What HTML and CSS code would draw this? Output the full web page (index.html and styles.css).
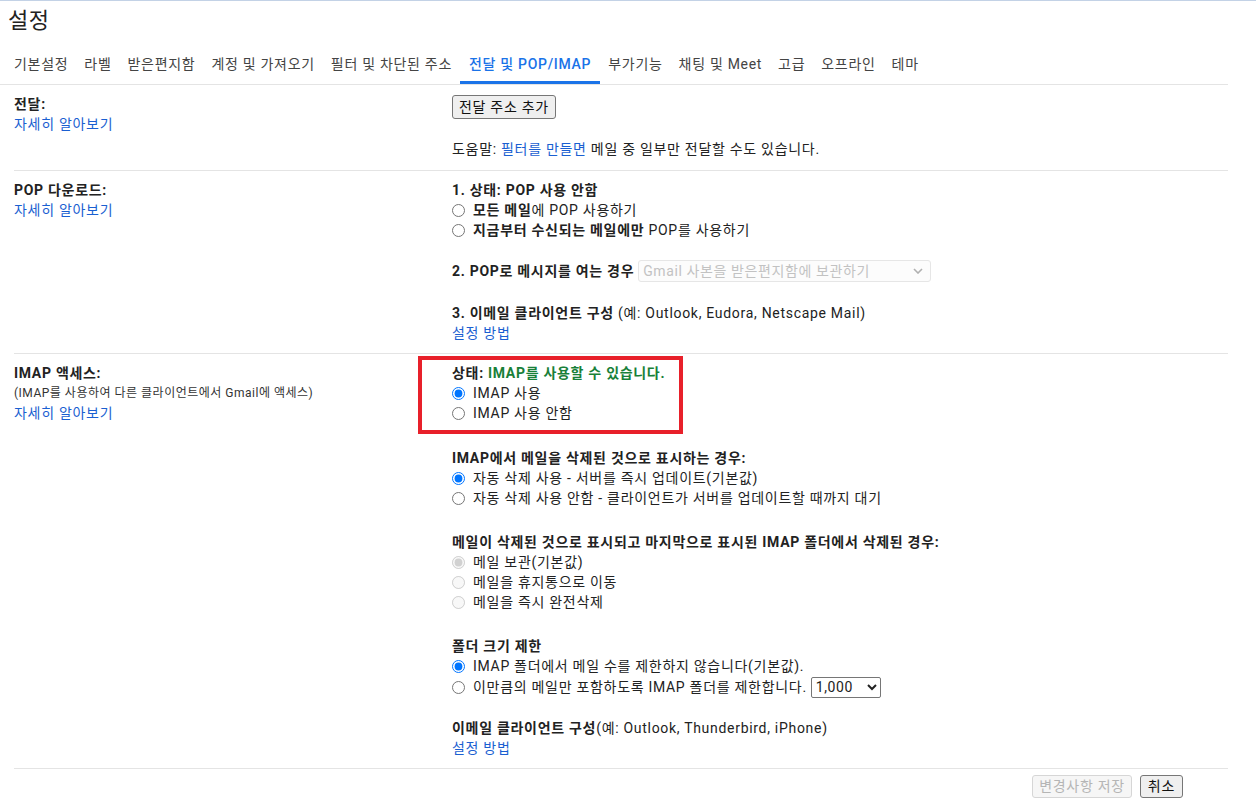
FILE: index.html
```html
<!DOCTYPE html>
<html lang="ko">
<head>
<meta charset="utf-8">
<title>설정</title>
<link rel="stylesheet" href="styles.css">
</head>
<body>
<div class="title">설정</div>
<nav class="tabs">
  <span class="tab">기본설정</span>
  <span class="tab">라벨</span>
  <span class="tab">받은편지함</span>
  <span class="tab">계정 및 가져오기</span>
  <span class="tab">필터 및 차단된 주소</span>
  <span class="tab active">전달 및 POP/IMAP</span>
  <span class="tab">부가기능</span>
  <span class="tab">채팅 및 Meet</span>
  <span class="tab">고급</span>
  <span class="tab">오프라인</span>
  <span class="tab">테마</span>
</nav>

<div class="settings">
  <div class="row row-fwd">
    <div class="left">
      <div class="b">전달:</div>
      <div><a class="link">자세히 알아보기</a></div>
    </div>
    <div class="right">
      <button class="btn btn-add">전달 주소 추가</button>
      <div class="sect gap20">도움말: <a class="link">필터를 만들면</a> 메일 중 일부만 전달할 수도 있습니다.</div>
    </div>
  </div>

  <div class="row">
    <div class="left">
      <div class="b">POP 다운로드:</div>
      <div><a class="link">자세히 알아보기</a></div>
    </div>
    <div class="right">
      <div class="sect">
        <div class="b">1. 상태: POP 사용 안함</div>
        <label class="opt"><input type="radio" name="pop"><span><b>모든 메일</b>에 POP 사용하기</span></label>
        <label class="opt"><input type="radio" name="pop"><span><b>지금부터 수신되는 메일에만</b> POP를 사용하기</span></label>
      </div>
      <div class="sect gap20 selline">
        <b>2. POP로 메시지를 여는 경우</b>
        <span class="selwrap">
          <select class="sel-dis" disabled><option>Gmail 사본을 받은편지함에 보관하기</option></select>
          <svg class="chev" width="10" height="6" viewBox="0 0 10 6"><path d="M1 1l4 4 4-4" fill="none" stroke="#b0b0b0" stroke-width="1.6"/></svg>
        </span>
      </div>
      <div class="sect gap21">
        <div><b>3. 이메일 클라이언트 구성</b> (예: Outlook, Eudora, Netscape Mail)</div>
        <div><a class="link">설정 방법</a></div>
      </div>
    </div>
  </div>

  <div class="row">
    <div class="left">
      <div class="b">IMAP 액세스:</div>
      <div class="small">(IMAP를 사용하여 다른 클라이언트에서 Gmail에 액세스)</div>
      <div><a class="link">자세히 알아보기</a></div>
    </div>
    <div class="right">
      <div class="sect status">
        <div class="b">상태: <span class="ok">IMAP를 사용할 수 있습니다.</span></div>
        <label class="opt"><input type="radio" name="imap" checked><span>IMAP 사용</span></label>
        <label class="opt"><input type="radio" name="imap"><span>IMAP 사용 안함</span></label>
        <div class="highlight"></div>
      </div>
      <div class="sect gap25">
        <div class="b">IMAP에서 메일을 삭제된 것으로 표시하는 경우:</div>
        <label class="opt"><input type="radio" name="del" checked><span>자동 삭제 사용 - 서버를 즉시 업데이트(기본값)</span></label>
        <label class="opt"><input type="radio" name="del"><span>자동 삭제 사용 안함 - 클라이언트가 서버를 업데이트할 때까지 대기</span></label>
      </div>
      <div class="sect gap24">
        <div class="b">메일이 삭제된 것으로 표시되고 마지막으로 표시된 IMAP 폴더에서 삭제된 경우:</div>
        <label class="opt"><input type="radio" name="exp" checked disabled><span>메일 보관(기본값)</span></label>
        <label class="opt"><input type="radio" name="exp" disabled><span>메일을 휴지통으로 이동</span></label>
        <label class="opt"><input type="radio" name="exp" disabled><span>메일을 즉시 완전삭제</span></label>
      </div>
      <div class="sect gap24">
        <div class="b">폴더 크기 제한</div>
        <label class="opt"><input type="radio" name="lim" checked><span>IMAP 폴더에서 메일 수를 제한하지 않습니다(기본값).</span></label>
        <label class="opt opt-sel"><input type="radio" name="lim"><span>이만큼의 메일만 포함하도록 IMAP 폴더를 제한합니다.</span>
          <select class="sel-num"><option>1,000</option><option>2,000</option><option>5,000</option><option>10,000</option></select>
        </label>
      </div>
      <div class="sect gap20">
        <div><b>이메일 클라이언트 구성</b>(예: Outlook, Thunderbird, iPhone)</div>
        <div><a class="link">설정 방법</a></div>
      </div>
    </div>
  </div>
</div>

<div class="footer">
  <button class="btn" disabled>변경사항 저장</button>
  <button class="btn btn-cancel">취소</button>
</div>
</body>
</html>
```

FILE: styles.css
```css
html, body {
  margin: 0;
  padding: 0;
  background: #fff;
}
body {
  border-top: 1px solid #c3d2e6;
  font-family: "Roboto", "Noto Sans CJK KR", sans-serif;
  font-size: 14px;
  line-height: 20px;
  letter-spacing: 0.7px;
  color: #222;
}
b, .b {
  font-weight: 700;
}
.title {
  height: 40px;
  line-height: 40px;
  padding-left: 8px;
  font-size: 22px;
  letter-spacing: 0.5px;
  color: #222;
}
.tabs {
  display: flex;
  margin-right: 28px;
  padding-left: 6px;
  border-bottom: 1px solid #e4e4e4;
}
.tab {
  padding: 13px 8px 10px;
  color: #444;
  white-space: nowrap;
}
.tab.active {
  color: #1a73e8;
  font-weight: 500;
  padding: 13px 9px 10px;
  box-shadow: inset 0 -3px 0 #1a73e8;
}
.settings {
  margin: 0 28px 0 14px;
}
.row {
  display: grid;
  grid-template-columns: 438px 1fr;
  padding: 9px 0 10px;
  border-bottom: 1px solid #e4e4e4;
}
.row-fwd {
  padding-bottom: 11px;
}
.link {
  color: #1a5fd1;
  cursor: pointer;
}
.small {
  font-size: 12px;
  letter-spacing: 0.5px;
  color: #333;
}
.sect {
  position: relative;
}
.gap20 { margin-top: 20px; }
.gap21 { margin-top: 21px; }
.gap24 { margin-top: 24px; }
.gap25 { margin-top: 25px; }
.selline {
  display: flex;
  align-items: center;
  height: 22px;
  gap: 4px;
}
.opt {
  display: flex;
  align-items: center;
  height: 20px;
  white-space: nowrap;
}
.opt input {
  width: 13px;
  height: 13px;
  margin: 0 8px 0 0;
}
.opt-sel {
  height: 22px;
}
.ok {
  color: #188038;
}
.btn {
  font-family: "Roboto", "Noto Sans CJK KR", sans-serif;
  font-size: 14px;
  line-height: 20px;
  letter-spacing: 0.7px;
  padding: 1px 6px;
  color: #111;
  background: #efefef;
  border: 1px solid #767676;
  border-radius: 3px;
}
.btn-add {
  display: block;
  margin-top: 1px;
}
.btn:disabled {
  color: #b5b5b5;
  background: #f6f6f6;
  border-color: #d6d6d6;
}
.selwrap {
  position: relative;
  display: inline-flex;
}
.sel-dis {
  appearance: none;
  -webkit-appearance: none;
  width: 293px;
  height: 22px;
  padding: 0 4px;
  font-family: "Roboto", "Noto Sans CJK KR", sans-serif;
  font-size: 14px;
  letter-spacing: 0.6px;
  color: #a9a9a9;
  background: #fbfbfb;
  border: 1px solid #dcdcdc;
  border-radius: 3px;
}
.chev {
  position: absolute;
  right: 8px;
  top: 8px;
}
.sel-num {
  width: 70px;
  height: 21px;
  margin-left: 4px;
  font-family: "Roboto", "Noto Sans CJK KR", sans-serif;
  font-size: 14px;
  letter-spacing: 0.6px;
  color: #222;
  border: 1px solid #767676;
  border-radius: 2px;
  background: #fff;
}
.highlight {
  position: absolute;
  left: -34px;
  top: -7px;
  width: 257px;
  height: 70px;
  border: 4px solid #e8202a;
  pointer-events: none;
}
.footer {
  display: flex;
  justify-content: flex-end;
  gap: 8px;
  padding: 6px 73px 0 0;
}
.btn-cancel {
  padding: 0 7px;
}
.footer .btn {
  line-height: 19px;
}
```
